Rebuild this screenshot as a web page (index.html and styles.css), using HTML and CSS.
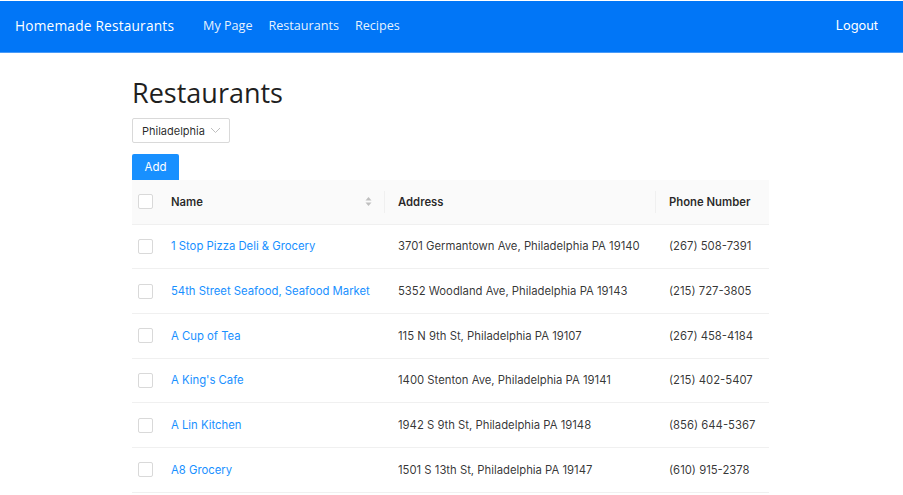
FILE: index.html
```html
<!DOCTYPE html>
<html>
<head>
<meta charset="utf-8">
<link rel="stylesheet" href="styles.css">
</head>
<body>
<nav class="navbar">
  <div class="nav-left">
    <a class="brand" href="#">Homemade Restaurants</a>
    <a class="nav-link" href="#">My Page</a>
    <a class="nav-link" href="#">Restaurants</a>
    <a class="nav-link" href="#">Recipes</a>
  </div>
  <a class="logout" href="#">Logout</a>
</nav>
<main class="container">
  <h1 class="title">Restaurants</h1>
  <div class="select">
    <span>Philadelphia</span>
    <svg class="chev" width="11" height="7" viewBox="0 0 11 7"><path d="M1 1l4.5 4.5L10 1" fill="none" stroke="#bfbfbf" stroke-width="1"/></svg>
  </div>
  <button class="btn-add">Add</button>
  <table class="table">
    <thead>
      <tr>
        <th class="c-check"><span class="cb"></span></th>
        <th class="c-name"><div class="th-inner"><span>Name</span><svg class="sorter" width="7" height="11" viewBox="0 0 7 11"><path d="M3.5 1L6.5 4.5H0.5z" fill="#bfbfbf"/><path d="M3.5 10L6.5 6.5H0.5z" fill="#bfbfbf"/></svg></div></th>
        <th class="c-addr sep">Address</th>
        <th class="c-phone sep">Phone Number</th>
      </tr>
    </thead>
    <tbody>
      <tr><td class="c-check"><span class="cb"></span></td><td class="c-name"><a href="#">1 Stop Pizza Deli &amp; Grocery</a></td><td class="c-addr">3701 Germantown Ave, Philadelphia PA 19140</td><td class="c-phone">(267) 508-7391</td></tr>
      <tr><td class="c-check"><span class="cb"></span></td><td class="c-name"><a href="#">54th Street Seafood, Seafood Market</a></td><td class="c-addr">5352 Woodland Ave, Philadelphia PA 19143</td><td class="c-phone">(215) 727-3805</td></tr>
      <tr><td class="c-check"><span class="cb"></span></td><td class="c-name"><a href="#">A Cup of Tea</a></td><td class="c-addr">115 N 9th St, Philadelphia PA 19107</td><td class="c-phone">(267) 458-4184</td></tr>
      <tr><td class="c-check"><span class="cb"></span></td><td class="c-name"><a href="#">A King's Cafe</a></td><td class="c-addr">1400 Stenton Ave, Philadelphia PA 19141</td><td class="c-phone">(215) 402-5407</td></tr>
      <tr><td class="c-check"><span class="cb"></span></td><td class="c-name"><a href="#">A Lin Kitchen</a></td><td class="c-addr">1942 S 9th St, Philadelphia PA 19148</td><td class="c-phone">(856) 644-5367</td></tr>
      <tr><td class="c-check"><span class="cb"></span></td><td class="c-name"><a href="#">A8 Grocery</a></td><td class="c-addr">1501 S 13th St, Philadelphia PA 19147</td><td class="c-phone">(610) 915-2378</td></tr>
    </tbody>
  </table>
</main>
</body>
</html>
```
FILE: styles.css
```css
* { box-sizing: border-box; }
html, body { margin: 0; padding: 0; background: #fff; }
body { font-family: Inter, "Liberation Sans", sans-serif; color: rgba(0,0,0,0.85); }
a { text-decoration: none; }

.navbar {
  height: 52px;
  margin-top: 1px;
  background: #0176f7;
  border-bottom: 1px solid #4a9bf8;
  display: flex;
  align-items: center;
  justify-content: space-between;
  padding: 0 25px 2px 15px;
}
.nav-left { display: flex; align-items: center; }
.brand {
  color: #fff;
  font-family: "Open Sans", sans-serif;
  font-size: 13.7px;
  font-weight: 500;
  margin-right: 29px;
  letter-spacing: 0.2px;
}
.nav-link {
  color: rgba(255,255,255,0.92);
  font-family: "Open Sans", sans-serif;
  font-size: 12.6px;
  margin-right: 16px;
}
.logout { color: #fff; font-size: 12.8px; }

.container { width: 637px; margin: 0 auto; padding-top: 24px; position: relative; left: -1px; }
.title {
  margin: 0 0 9px;
  font-family: "Open Sans", sans-serif;
  font-weight: 400;
  font-size: 27px;
  line-height: 32px;
  color: #1f1f1f;
}
.select {
  width: 98px;
  height: 25px;
  border: 1px solid #d9d9d9;
  border-radius: 2px;
  display: flex;
  align-items: center;
  padding: 0 8px 0 9px;
  font-size: 11px;
  color: rgba(0,0,0,0.85);
  justify-content: space-between;
}
.btn-add {
  display: block;
  margin-top: 11px;
  width: 47px;
  height: 26px;
  border: none;
  border-radius: 2px 2px 0 0;
  background: #1890ff;
  color: #fff;
  font-family: Inter, sans-serif;
  font-size: 11.5px;
  padding: 0;
}
.table { width: 637px; border-collapse: collapse; font-size: 11.3px; table-layout: fixed; white-space: nowrap; }
.table th {
  background: #fafafa;
  height: 44px;
  font-weight: 600;
  text-align: left;
  border-bottom: 1px solid #f0f0f0;
  position: relative;
  color: rgba(0,0,0,0.85);
}
.table td {
  height: 44.7px;
  border-bottom: 1px solid #f0f0f0;
  color: rgba(0,0,0,0.8);
}
.c-check { width: 23px; padding: 0 0 0 6px; }
.c-name { width: 229px; padding: 0 16px; }
.c-addr { width: 271px; padding: 0 14px; }
.c-phone { padding: 0 14px; }
.sep::before {
  content: "";
  position: absolute;
  left: 0; top: 50%;
  width: 1px; height: 22px;
  margin-top: -11px;
  background: #f0f0f0;
}
.th-inner { display: flex; justify-content: space-between; align-items: center; }
.sorter { margin-right: -4px; }
.cb {
  display: block;
  width: 15px; height: 15px;
  border: 1px solid #d9d9d9;
  border-radius: 2px;
  background: #fff;
}
.c-name a { color: #1890ff; }
```
